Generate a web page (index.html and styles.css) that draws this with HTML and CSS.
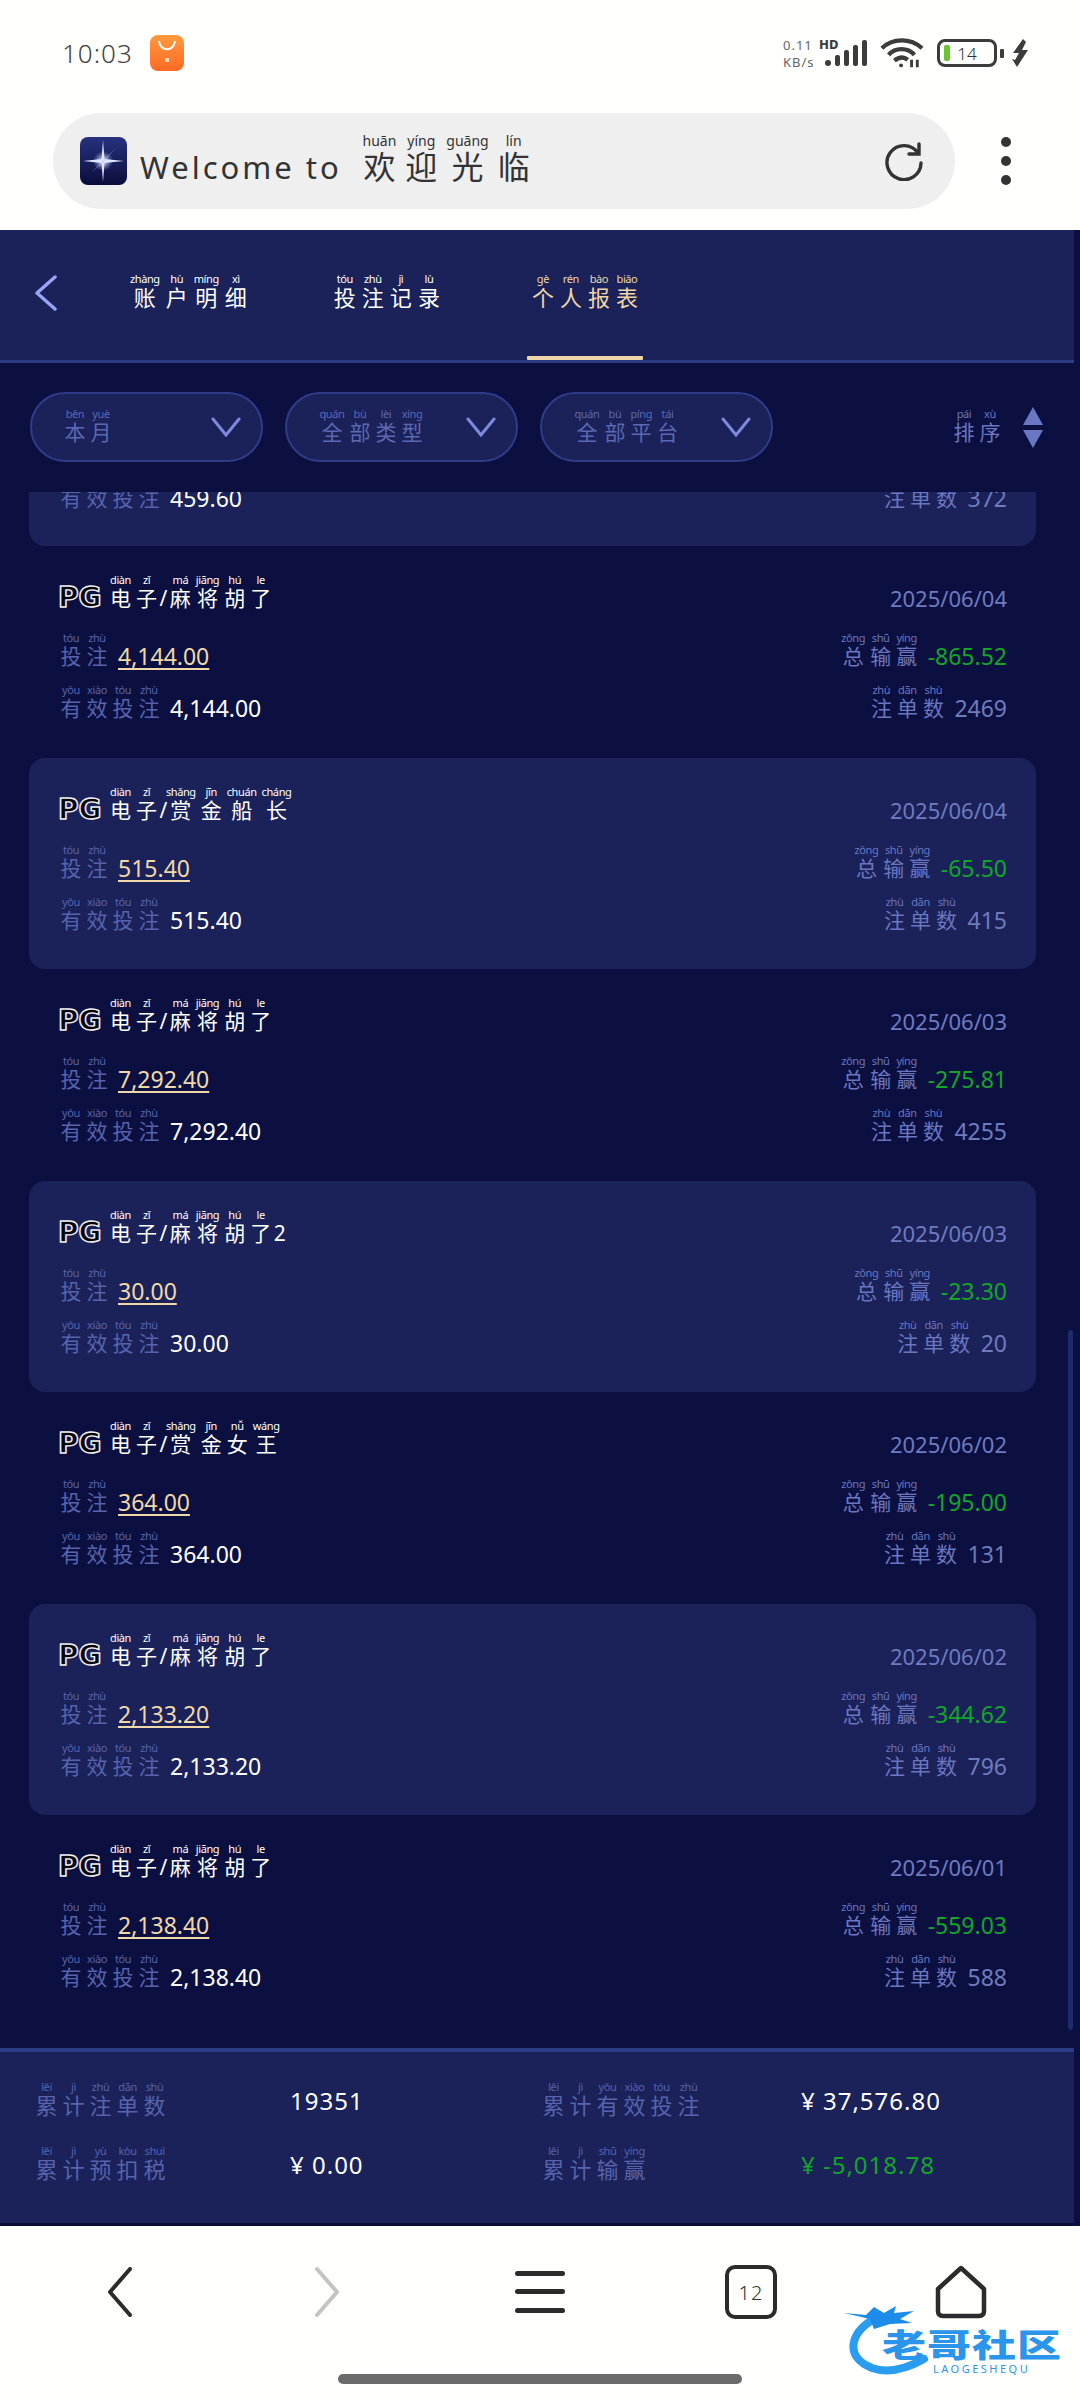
FILE: index.html
```html
<!DOCTYPE html>
<html lang="zh-CN">
<head>
    <meta charset="UTF-8">
    <meta name="viewport" content="width=device-width, initial-scale=1.0">
    <title>Welcome to 欢迎光临</title>
    <link rel="stylesheet" href="styles.css">
</head>
<body>
    <!-- phone status bar -->
    <div class="status-bar">
        <div class="status-left">
            <span class="clock">10:03</span>
            <svg class="shop-icon" width="34" height="36" viewBox="0 0 34 36">
                <defs><linearGradient id="shop" x1="0" y1="0" x2="0" y2="1"><stop offset="0" stop-color="#ff9a3c"/><stop offset="1" stop-color="#ff6a26"/></linearGradient></defs>
                <rect width="34" height="36" rx="8" fill="url(#shop)"/>
                <path d="M9 6 C10 17 24 17 25 6" fill="none" stroke="#fff" stroke-width="2"/>
                <rect x="15" y="23" width="4" height="4" fill="#ffd9b8"/>
            </svg>
        </div>
        <div class="status-right">
            <div class="net-speed"><span>0.11</span><span>KB/s</span></div>
            <div class="signal">
                <span class="hd">HD</span>
                <svg width="44" height="28" viewBox="0 0 44 28" fill="#3c3c3c">
                    <rect x="1" y="21" width="6" height="6" rx="3"/>
                    <rect x="11" y="16" width="5" height="11" rx="2"/>
                    <rect x="20" y="11" width="5" height="16" rx="2"/>
                    <rect x="29" y="6" width="5" height="21" rx="2"/>
                    <rect x="38" y="1" width="5" height="26" rx="2"/>
                </svg>
            </div>
            <svg class="wifi" width="44" height="32" viewBox="0 0 46 32" fill="none" stroke="#3c3c3c" stroke-width="4.5">
                <path d="M2 11 C13 0 32 0 44 11"/>
                <path d="M9 18 C16 10 29 10 36 18"/>
                <path d="M15 24 C20 20 25 20 29 23"/>
                <circle cx="22" cy="29" r="2" fill="#3c3c3c" stroke="none"/>
                <path d="M33 23 V31 M39 23 V31" stroke-width="3"/>
            </svg>
            <div class="battery"><span class="battery-fill"></span><span class="battery-num">14</span></div>
            <span class="battery-nub"></span>
            <svg width="17" height="28" viewBox="0 0 17 28" fill="#3c3c3c"><path d="M11 0 L1 14 H7 L3 21 L0 20 L5 28 L16 11 H10 L14 3 Z"/></svg>
        </div>
    </div>

    <!-- browser address bar -->
    <div class="browser-bar">
        <div class="address-pill">
            <svg class="favicon" width="47" height="48" viewBox="0 0 47 48">
                <defs>
                    <linearGradient id="favbg" x1="0" y1="0" x2="0" y2="1"><stop offset="0" stop-color="#27327e"/><stop offset="1" stop-color="#0a0c3a"/></linearGradient>
                    <radialGradient id="favglow"><stop offset="0" stop-color="#fff"/><stop offset="1" stop-color="#9fb4ff" stop-opacity="0"/></radialGradient>
                </defs>
                <rect width="47" height="48" rx="8" fill="url(#favbg)"/>
                <circle cx="23" cy="24" r="10" fill="url(#favglow)"/>
                <path d="M23 3 L24.5 22 L44 24 L24.5 26 L23 45 L21.5 26 L3 24 L21.5 22 Z" fill="#dfe6ff"/>
                <path d="M37 10 L24 23 L12 35 L23 25 Z" fill="#aebcff"/>
            </svg>
            <span class="page-title">Welcome to <span class="han"><ruby>欢<rt>huān</rt></ruby><ruby>迎<rt>yíng</rt></ruby><ruby>光<rt>guāng</rt></ruby><ruby>临<rt>lín</rt></ruby></span></span>
            <svg class="reload" width="42" height="40" viewBox="0 0 42 40" fill="none" stroke="#333" stroke-width="3.4" stroke-linecap="round">
                <path d="M35 12 A17 17 0 1 0 38 22"/>
                <path d="M36 3 V13 H26"/>
            </svg>
        </div>
        <div class="more-dots"><span></span><span></span><span></span></div>
    </div>

    <div class="app">
        <header class="tabs">
            <svg class="back" width="24" height="36" viewBox="0 0 24 36" fill="none" stroke="#98a4f4" stroke-width="3.4" stroke-linecap="round" stroke-linejoin="round"><path d="M21 2 L3 18 L21 34"/></svg>
            <a class="tab tab-first"><ruby>账<rt>zhàng</rt></ruby><ruby>户<rt>hù</rt></ruby><ruby>明<rt>míng</rt></ruby><ruby>细<rt>xì</rt></ruby></a>
            <a class="tab"><ruby>投<rt>tóu</rt></ruby><ruby>注<rt>zhù</rt></ruby><ruby>记<rt>jì</rt></ruby><ruby>录<rt>lù</rt></ruby></a>
            <a class="tab active"><span><ruby>个<rt>gè</rt></ruby><ruby>人<rt>rén</rt></ruby><ruby>报<rt>bào</rt></ruby><ruby>表<rt>biǎo</rt></ruby></span></a>
        </header>

        <div class="filters">
            <div class="select"><span><ruby>本<rt>běn</rt></ruby><ruby>月<rt>yuè</rt></ruby></span><svg width="30" height="20" viewBox="0 0 30 20" fill="none" stroke="#7c89dc" stroke-width="3" stroke-linecap="round"><path d="M2 2 L15 18 L28 2"/></svg></div>
            <div class="select"><span><ruby>全<rt>quán</rt></ruby><ruby>部<rt>bù</rt></ruby><ruby>类<rt>lèi</rt></ruby><ruby>型<rt>xíng</rt></ruby></span><svg width="30" height="20" viewBox="0 0 30 20" fill="none" stroke="#7c89dc" stroke-width="3" stroke-linecap="round"><path d="M2 2 L15 18 L28 2"/></svg></div>
            <div class="select"><span><ruby>全<rt>quán</rt></ruby><ruby>部<rt>bù</rt></ruby><ruby>平<rt>píng</rt></ruby><ruby>台<rt>tái</rt></ruby></span><svg width="30" height="20" viewBox="0 0 30 20" fill="none" stroke="#7c89dc" stroke-width="3" stroke-linecap="round"><path d="M2 2 L15 18 L28 2"/></svg></div>
            <div class="sort">
                <span><ruby>排<rt>pái</rt></ruby><ruby>序<rt>xù</rt></ruby></span>
                <div class="sort-arrows"><i class="up"></i><i class="down"></i></div>
            </div>
        </div>

        <div class="list">
            <!-- first record is scrolled mostly out of view -->
            <div class="record card scrolled-off">
                <div class="line">
                    <div class="cell"><span class="label"><ruby>有<rt>yǒu</rt></ruby><ruby>效<rt>xiào</rt></ruby><ruby>投<rt>tóu</rt></ruby><ruby>注<rt>zhù</rt></ruby></span><span class="num">459.60</span></div>
                    <div class="cell right"><span class="label"><ruby>注<rt>zhù</rt></ruby><ruby>单<rt>dān</rt></ruby><ruby>数<rt>shù</rt></ruby></span><span class="num dim">372</span></div>
                </div>
            </div>

            <div class="record">
                <div class="line title-line">
                    <div class="game"><span class="pg">PG</span><span><ruby>电<rt>diàn</rt></ruby><ruby>子<rt>zǐ</rt></ruby><span class="slash">/</span><ruby>麻<rt>má</rt></ruby><ruby>将<rt>jiāng</rt></ruby><ruby>胡<rt>hú</rt></ruby><ruby>了<rt>le</rt></ruby></span></div>
                    <span class="date">2025/06/04</span>
                </div>
                <div class="line bet-line">
                    <div class="cell"><span class="label"><ruby>投<rt>tóu</rt></ruby><ruby>注<rt>zhù</rt></ruby></span><span class="num amount">4,144.00</span></div>
                    <div class="cell right"><span class="label"><ruby>总<rt>zǒng</rt></ruby><ruby>输<rt>shū</rt></ruby><ruby>赢<rt>yíng</rt></ruby></span><span class="num loss">-865.52</span></div>
                </div>
                <div class="line">
                    <div class="cell"><span class="label"><ruby>有<rt>yǒu</rt></ruby><ruby>效<rt>xiào</rt></ruby><ruby>投<rt>tóu</rt></ruby><ruby>注<rt>zhù</rt></ruby></span><span class="num">4,144.00</span></div>
                    <div class="cell right"><span class="label"><ruby>注<rt>zhù</rt></ruby><ruby>单<rt>dān</rt></ruby><ruby>数<rt>shù</rt></ruby></span><span class="num dim">2469</span></div>
                </div>
            </div>

            <div class="record card">
                <div class="line title-line">
                    <div class="game"><span class="pg">PG</span><span><ruby>电<rt>diàn</rt></ruby><ruby>子<rt>zǐ</rt></ruby><span class="slash">/</span><ruby>赏<rt>shǎng</rt></ruby><ruby>金<rt>jīn</rt></ruby><ruby>船<rt>chuán</rt></ruby><ruby>长<rt>cháng</rt></ruby></span></div>
                    <span class="date">2025/06/04</span>
                </div>
                <div class="line bet-line">
                    <div class="cell"><span class="label"><ruby>投<rt>tóu</rt></ruby><ruby>注<rt>zhù</rt></ruby></span><span class="num amount">515.40</span></div>
                    <div class="cell right"><span class="label"><ruby>总<rt>zǒng</rt></ruby><ruby>输<rt>shū</rt></ruby><ruby>赢<rt>yíng</rt></ruby></span><span class="num loss">-65.50</span></div>
                </div>
                <div class="line">
                    <div class="cell"><span class="label"><ruby>有<rt>yǒu</rt></ruby><ruby>效<rt>xiào</rt></ruby><ruby>投<rt>tóu</rt></ruby><ruby>注<rt>zhù</rt></ruby></span><span class="num">515.40</span></div>
                    <div class="cell right"><span class="label"><ruby>注<rt>zhù</rt></ruby><ruby>单<rt>dān</rt></ruby><ruby>数<rt>shù</rt></ruby></span><span class="num dim">415</span></div>
                </div>
            </div>

            <div class="record">
                <div class="line title-line">
                    <div class="game"><span class="pg">PG</span><span><ruby>电<rt>diàn</rt></ruby><ruby>子<rt>zǐ</rt></ruby><span class="slash">/</span><ruby>麻<rt>má</rt></ruby><ruby>将<rt>jiāng</rt></ruby><ruby>胡<rt>hú</rt></ruby><ruby>了<rt>le</rt></ruby></span></div>
                    <span class="date">2025/06/03</span>
                </div>
                <div class="line bet-line">
                    <div class="cell"><span class="label"><ruby>投<rt>tóu</rt></ruby><ruby>注<rt>zhù</rt></ruby></span><span class="num amount">7,292.40</span></div>
                    <div class="cell right"><span class="label"><ruby>总<rt>zǒng</rt></ruby><ruby>输<rt>shū</rt></ruby><ruby>赢<rt>yíng</rt></ruby></span><span class="num loss">-275.81</span></div>
                </div>
                <div class="line">
                    <div class="cell"><span class="label"><ruby>有<rt>yǒu</rt></ruby><ruby>效<rt>xiào</rt></ruby><ruby>投<rt>tóu</rt></ruby><ruby>注<rt>zhù</rt></ruby></span><span class="num">7,292.40</span></div>
                    <div class="cell right"><span class="label"><ruby>注<rt>zhù</rt></ruby><ruby>单<rt>dān</rt></ruby><ruby>数<rt>shù</rt></ruby></span><span class="num dim">4255</span></div>
                </div>
            </div>

            <div class="record card">
                <div class="line title-line">
                    <div class="game"><span class="pg">PG</span><span><ruby>电<rt>diàn</rt></ruby><ruby>子<rt>zǐ</rt></ruby><span class="slash">/</span><ruby>麻<rt>má</rt></ruby><ruby>将<rt>jiāng</rt></ruby><ruby>胡<rt>hú</rt></ruby><ruby>了<rt>le</rt></ruby>2</span></div>
                    <span class="date">2025/06/03</span>
                </div>
                <div class="line bet-line">
                    <div class="cell"><span class="label"><ruby>投<rt>tóu</rt></ruby><ruby>注<rt>zhù</rt></ruby></span><span class="num amount">30.00</span></div>
                    <div class="cell right"><span class="label"><ruby>总<rt>zǒng</rt></ruby><ruby>输<rt>shū</rt></ruby><ruby>赢<rt>yíng</rt></ruby></span><span class="num loss">-23.30</span></div>
                </div>
                <div class="line">
                    <div class="cell"><span class="label"><ruby>有<rt>yǒu</rt></ruby><ruby>效<rt>xiào</rt></ruby><ruby>投<rt>tóu</rt></ruby><ruby>注<rt>zhù</rt></ruby></span><span class="num">30.00</span></div>
                    <div class="cell right"><span class="label"><ruby>注<rt>zhù</rt></ruby><ruby>单<rt>dān</rt></ruby><ruby>数<rt>shù</rt></ruby></span><span class="num dim">20</span></div>
                </div>
            </div>

            <div class="record">
                <div class="line title-line">
                    <div class="game"><span class="pg">PG</span><span><ruby>电<rt>diàn</rt></ruby><ruby>子<rt>zǐ</rt></ruby><span class="slash">/</span><ruby>赏<rt>shǎng</rt></ruby><ruby>金<rt>jīn</rt></ruby><ruby>女<rt>nǚ</rt></ruby><ruby>王<rt>wáng</rt></ruby></span></div>
                    <span class="date">2025/06/02</span>
                </div>
                <div class="line bet-line">
                    <div class="cell"><span class="label"><ruby>投<rt>tóu</rt></ruby><ruby>注<rt>zhù</rt></ruby></span><span class="num amount">364.00</span></div>
                    <div class="cell right"><span class="label"><ruby>总<rt>zǒng</rt></ruby><ruby>输<rt>shū</rt></ruby><ruby>赢<rt>yíng</rt></ruby></span><span class="num loss">-195.00</span></div>
                </div>
                <div class="line">
                    <div class="cell"><span class="label"><ruby>有<rt>yǒu</rt></ruby><ruby>效<rt>xiào</rt></ruby><ruby>投<rt>tóu</rt></ruby><ruby>注<rt>zhù</rt></ruby></span><span class="num">364.00</span></div>
                    <div class="cell right"><span class="label"><ruby>注<rt>zhù</rt></ruby><ruby>单<rt>dān</rt></ruby><ruby>数<rt>shù</rt></ruby></span><span class="num dim">131</span></div>
                </div>
            </div>

            <div class="record card">
                <div class="line title-line">
                    <div class="game"><span class="pg">PG</span><span><ruby>电<rt>diàn</rt></ruby><ruby>子<rt>zǐ</rt></ruby><span class="slash">/</span><ruby>麻<rt>má</rt></ruby><ruby>将<rt>jiāng</rt></ruby><ruby>胡<rt>hú</rt></ruby><ruby>了<rt>le</rt></ruby></span></div>
                    <span class="date">2025/06/02</span>
                </div>
                <div class="line bet-line">
                    <div class="cell"><span class="label"><ruby>投<rt>tóu</rt></ruby><ruby>注<rt>zhù</rt></ruby></span><span class="num amount">2,133.20</span></div>
                    <div class="cell right"><span class="label"><ruby>总<rt>zǒng</rt></ruby><ruby>输<rt>shū</rt></ruby><ruby>赢<rt>yíng</rt></ruby></span><span class="num loss">-344.62</span></div>
                </div>
                <div class="line">
                    <div class="cell"><span class="label"><ruby>有<rt>yǒu</rt></ruby><ruby>效<rt>xiào</rt></ruby><ruby>投<rt>tóu</rt></ruby><ruby>注<rt>zhù</rt></ruby></span><span class="num">2,133.20</span></div>
                    <div class="cell right"><span class="label"><ruby>注<rt>zhù</rt></ruby><ruby>单<rt>dān</rt></ruby><ruby>数<rt>shù</rt></ruby></span><span class="num dim">796</span></div>
                </div>
            </div>

            <div class="record">
                <div class="line title-line">
                    <div class="game"><span class="pg">PG</span><span><ruby>电<rt>diàn</rt></ruby><ruby>子<rt>zǐ</rt></ruby><span class="slash">/</span><ruby>麻<rt>má</rt></ruby><ruby>将<rt>jiāng</rt></ruby><ruby>胡<rt>hú</rt></ruby><ruby>了<rt>le</rt></ruby></span></div>
                    <span class="date">2025/06/01</span>
                </div>
                <div class="line bet-line">
                    <div class="cell"><span class="label"><ruby>投<rt>tóu</rt></ruby><ruby>注<rt>zhù</rt></ruby></span><span class="num amount">2,138.40</span></div>
                    <div class="cell right"><span class="label"><ruby>总<rt>zǒng</rt></ruby><ruby>输<rt>shū</rt></ruby><ruby>赢<rt>yíng</rt></ruby></span><span class="num loss">-559.03</span></div>
                </div>
                <div class="line">
                    <div class="cell"><span class="label"><ruby>有<rt>yǒu</rt></ruby><ruby>效<rt>xiào</rt></ruby><ruby>投<rt>tóu</rt></ruby><ruby>注<rt>zhù</rt></ruby></span><span class="num">2,138.40</span></div>
                    <div class="cell right"><span class="label"><ruby>注<rt>zhù</rt></ruby><ruby>单<rt>dān</rt></ruby><ruby>数<rt>shù</rt></ruby></span><span class="num dim">588</span></div>
                </div>
            </div>

            <div class="scrollbar"></div>
        </div>

        <div class="totals">
            <span class="label"><ruby>累<rt>lěi</rt></ruby><ruby>计<rt>jì</rt></ruby><ruby>注<rt>zhù</rt></ruby><ruby>单<rt>dān</rt></ruby><ruby>数<rt>shù</rt></ruby></span>
            <span class="num">19351</span>
            <span class="label"><ruby>累<rt>lěi</rt></ruby><ruby>计<rt>jì</rt></ruby><ruby>有<rt>yǒu</rt></ruby><ruby>效<rt>xiào</rt></ruby><ruby>投<rt>tóu</rt></ruby><ruby>注<rt>zhù</rt></ruby></span>
            <span class="num">¥ 37,576.80</span>
            <span class="label"><ruby>累<rt>lěi</rt></ruby><ruby>计<rt>jì</rt></ruby><ruby>预<rt>yù</rt></ruby><ruby>扣<rt>kòu</rt></ruby><ruby>税<rt>shuì</rt></ruby></span>
            <span class="num">¥ 0.00</span>
            <span class="label"><ruby>累<rt>lěi</rt></ruby><ruby>计<rt>jì</rt></ruby><ruby>输<rt>shū</rt></ruby><ruby>赢<rt>yíng</rt></ruby></span>
            <span class="num loss">¥ -5,018.78</span>
        </div>
    </div>

    <!-- browser bottom toolbar -->
    <nav class="toolbar">
        <svg class="tool-back" width="28" height="50" viewBox="0 0 28 50" fill="none" stroke="#2b2b2b" stroke-width="4" stroke-linecap="round" stroke-linejoin="round"><path d="M25 2 L5 25 L25 48"/></svg>
        <svg class="tool-forward" width="28" height="50" viewBox="0 0 28 50" fill="none" stroke="#c4c4c4" stroke-width="4" stroke-linecap="round" stroke-linejoin="round"><path d="M3 2 L23 25 L3 48"/></svg>
        <svg class="tool-menu" width="50" height="42" viewBox="0 0 50 42" fill="#2b2b2b"><rect y="0" width="50" height="5" rx="2.5"/><rect y="18" width="50" height="5" rx="2.5"/><rect y="37" width="50" height="5" rx="2.5"/></svg>
        <div class="tab-count">12</div>
        <svg class="tool-home" width="52" height="54" viewBox="0 0 52 54" fill="none" stroke="#2b2b2b" stroke-width="4.5" stroke-linejoin="round"><path d="M26 3 L49 24 V46 Q49 51 44 51 H8 Q3 51 3 46 V24 Z"/></svg>
    </nav>
    <div class="gesture-bar"></div>

    <!-- community mark in the lower corner -->
    <div class="community-mark">
        <svg width="90" height="72" viewBox="0 0 90 72" fill="none">
            <path d="M30 16 C6 30 0 54 28 65 C45 71 62 66 80 56" stroke="#2a9df0" stroke-width="8" stroke-linecap="round"/>
            <path d="M0 10 L22 12 L30 4 L40 10 L52 3 L50 10 L70 8 L56 16 L68 20 L46 21 L30 26 L26 16 Z" fill="#1c8ce8"/>
        </svg>
        <div class="mark-words"><b>老哥社区</b><small>LAOGESHEQU</small></div>
    </div>
</body>
</html>
```

FILE: styles.css
```css
* {
    box-sizing: border-box;
}

html,
body {
    margin: 0;
    padding: 0;
}

body {
    width: 1080px;
    height: 2400px;
    position: relative;
    overflow: hidden;
    background-color: #fffffd;
    font-family: "Noto Sans", "Noto Sans CJK SC", sans-serif;
}

ruby {
    ruby-position: over;
    margin: 0 2.5px;
}

/* pinyin sits tight on top of the characters */
rt {
    font-size: 11px;
    line-height: 2px;
    letter-spacing: -0.4px;
    font-family: "Noto Sans", sans-serif;
}

/* status bar */
.status-bar {
    height: 106px;
    padding: 0 51px 0 62px;
    display: flex;
    justify-content: space-between;
    align-items: center;
    color: #444;
}

.status-left {
    display: flex;
    align-items: center;
    gap: 17px;
}

.clock {
    font-size: 26px;
    font-weight: 300;
    letter-spacing: 1px;
}

.status-right {
    display: flex;
    align-items: center;
}

.net-speed {
    display: flex;
    flex-direction: column;
    gap: 3px;
    font-size: 13px;
    line-height: 14px;
    color: #666;
    width: 34px;
    margin-right: 7px;
}

.net-speed span {
    letter-spacing: 1px;
}

.signal {
    position: relative;
    width: 44px;
    height: 28px;
    margin-right: 12px;
}

.hd {
    position: absolute;
    left: -5px;
    top: -1px;
    font-size: 13px;
    line-height: 13px;
    font-weight: 800;
    color: #3c3c3c;
}

.wifi {
    margin-right: 13px;
}

.battery {
    position: relative;
    width: 60px;
    height: 28px;
    border: 3px solid #3c3c3c;
    border-radius: 8px;
    display: flex;
    align-items: center;
    justify-content: center;
}

.battery-fill {
    position: absolute;
    left: 4px;
    top: 3px;
    bottom: 3px;
    width: 6px;
    border-radius: 2px;
    background-color: #6cc430;
}

.battery-num {
    font-size: 17px;
    font-weight: 300;
    color: #333;
}

.battery-nub {
    width: 4px;
    height: 9px;
    margin: 0 8px 0 3px;
    background-color: #3c3c3c;
    border-radius: 1px;
}

/* address bar */
.browser-bar {
    height: 124px;
    padding: 7px 0 21px 53px;
    display: flex;
    align-items: center;
}

.address-pill {
    width: 902px;
    height: 96px;
    border-radius: 48px;
    background-color: #efefef;
    display: flex;
    align-items: center;
    padding: 0 30px 0 27px;
}

.favicon {
    flex-shrink: 0;
    margin-right: 13px;
}

.page-title {
    font-size: 31px;
    line-height: 40px;
    color: #333;
    letter-spacing: 3px;
    flex: 1;
}

.han {
    margin-left: 6px;
    letter-spacing: 0;
}

.page-title ruby {
    font-size: 32px;
    margin: 0 4.5px;
}

.page-title rt {
    font-size: 14px;
    letter-spacing: 0;
}

.more-dots {
    margin-left: 46px;
    display: flex;
    flex-direction: column;
    gap: 9px;
}

.more-dots span {
    width: 10px;
    height: 10px;
    border-radius: 50%;
    background-color: #333;
}

/* app */
.app {
    height: 1996px;
    background-color: #0c1040;
    display: flex;
    flex-direction: column;
}

.tabs {
    height: 133px;
    margin-right: 6px;
    background-color: #1a2259;
    border-bottom: 3px solid #2d3a85;
    display: flex;
    align-items: center;
    padding: 0 0 4px 34px;
    position: relative;
}

.tab {
    font-size: 22px;
    color: #fff;
    margin-right: 81px;
}

.tab ruby {
    margin: 0 3px;
}

.tab-first {
    margin-left: 69px;
}

.tab.active {
    color: #eed6a8;
    margin-left: 5px;
    position: relative;
    align-self: stretch;
    display: flex;
    align-items: center;
}

.tab.active::after {
    content: "";
    position: absolute;
    left: -2px;
    right: -2px;
    bottom: -4px;
    height: 4px;
    border-radius: 1px;
    background-color: #eed6a8;
}

.filters {
    height: 129px;
    flex-shrink: 0;
    padding: 29px 37px 0 30px;
    display: flex;
    gap: 22px;
}

.select {
    width: 233px;
    height: 70px;
    border: 2px solid #2f3c88;
    border-radius: 35px;
    background-color: #1a2259;
    display: flex;
    justify-content: space-between;
    align-items: center;
    padding: 0 20px 0 30px;
    font-size: 21px;
    color: #5c68b2;
}

.sort {
    margin-left: auto;
    height: 70px;
    display: flex;
    align-items: center;
    gap: 20px;
    font-size: 21px;
    color: #6a76c0;
}

.sort-arrows {
    display: flex;
    flex-direction: column;
    gap: 5px;
}

.sort-arrows i {
    display: block;
    width: 0;
    height: 0;
    border-left: 10px solid transparent;
    border-right: 10px solid transparent;
}

.sort-arrows .up {
    border-bottom: 18px solid #6a78c4;
}

.sort-arrows .down {
    border-top: 18px solid #6a78c4;
}

.list {
    flex: 1;
    min-height: 0;
    overflow: hidden;
    position: relative;
    padding: 0 44px 0 29px;
}

.record {
    height: 211.5px;
    padding: 25px 29px 0;
}

.card {
    background-color: #1a2259;
    border-radius: 16px;
}

.scrolled-off {
    height: 54px;
    padding-top: 0;
    display: flow-root;
    border-radius: 0 0 16px 16px;
}

.scrolled-off .line {
    margin-top: -21px;
}

.line {
    height: 40px;
    display: flex;
    justify-content: space-between;
    align-items: flex-end;
    font-size: 21px;
    line-height: 26px;
}

.title-line {
    margin-bottom: 18px;
}

.bet-line {
    margin-bottom: 12px;
}

.game {
    display: flex;
    align-items: flex-end;
    gap: 6px;
    color: #fff;
}

.slash {
    margin: 0;
}

.pg {
    font-family: "DejaVu Sans", sans-serif;
    font-weight: 700;
    font-size: 28px;
    line-height: 26px;
    letter-spacing: 0;
    color: #05060f;
    -webkit-text-stroke: 1.4px #f3f0ee;
    text-shadow: 1px 0 0 rgba(240, 150, 190, 0.5), -1px 0 0 rgba(120, 200, 240, 0.5);
}

.date {
    font-size: 22px;
    color: #6f7bc0;
}

.cell {
    display: flex;
    align-items: flex-end;
    gap: 8px;
}

.label {
    color: #5763ad;
}

.right .label {
    color: #6a76c0;
}

.num {
    font-size: 23px;
    color: #fff;
}

.num.dim {
    color: #6f7bbd;
}

.num.amount {
    color: #f0d8a8;
    text-decoration: underline;
    text-underline-offset: 3px;
    text-decoration-thickness: 2px;
}

.num.loss {
    color: #12a52a;
}

.scrollbar {
    position: absolute;
    right: 7px;
    top: 838px;
    width: 5px;
    height: 700px;
    border-radius: 3px;
    background-color: #1f2a6c;
}

.totals {
    height: 178px;
    flex-shrink: 0;
    margin-right: 6px;
    border-top: 4px solid #2d3a85;
    border-bottom: 3px solid #0a0d33;
    background-color: #1a2259;
    display: grid;
    grid-template-columns: 257px 250px 261px 1fr;
    grid-auto-rows: 64px;
    align-content: center;
    align-items: center;
    padding: 0 0 10px 33px;
    font-size: 22px;
}

.totals .num {
    font-size: 24px;
    letter-spacing: 1px;
}

/* bottom toolbar */
.toolbar {
    height: 174px;
    display: flex;
    align-items: flex-start;
    padding: 39px 0 0 105px;
}

.tool-back {
    margin-top: 2px;
}

.tool-forward {
    margin: 2px 0 0 181px;
}

.tool-menu {
    margin: 6px 0 0 173px;
}

.tab-count {
    width: 52px;
    height: 54px;
    margin-left: 160px;
    border: 4.5px solid #2b2b2b;
    border-radius: 10px;
    display: flex;
    align-items: center;
    justify-content: center;
    font-size: 20px;
    font-weight: 300;
    letter-spacing: 1px;
    color: #333;
}

.tool-home {
    margin-left: 158px;
}

.gesture-bar {
    position: absolute;
    left: 338px;
    top: 2374px;
    width: 404px;
    height: 10px;
    border-radius: 5px;
    background-color: #6b6b6b;
}

.community-mark {
    position: absolute;
    left: 844px;
    top: 2303px;
    width: 222px;
    height: 72px;
}

.community-mark svg {
    display: block;
}

.mark-words {
    position: absolute;
    left: 38px;
    top: 20px;
    display: flex;
    flex-direction: column;
    color: #2a95ea;
}

.mark-words b {
    font-family: "Noto Sans CJK SC", sans-serif;
    font-size: 44px;
    line-height: 40px;
    font-weight: 900;
    letter-spacing: 1px;
    white-space: nowrap;
    transform: scaleY(0.72);
}

.mark-words small {
    font-size: 11px;
    line-height: 12px;
    letter-spacing: 2.5px;
    margin-left: 51px;
}
```
